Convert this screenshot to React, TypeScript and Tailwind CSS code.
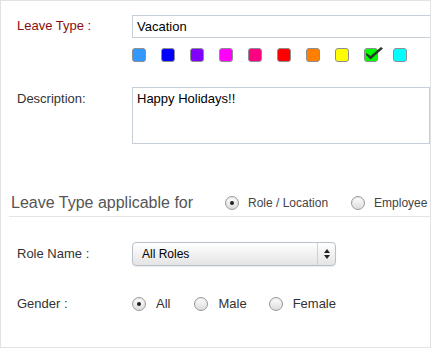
import React from "react";

const swatches = [
  "#3399ff",
  "#0000ff",
  "#8000ff",
  "#ff00ff",
  "#ff0080",
  "#ff0000",
  "#ff8000",
  "#ffff00",
  "#00ff00",
  "#00ffff",
];

function Radio({
  checked,
  label,
  wide,
}: {
  checked?: boolean;
  label: string;
  wide?: boolean;
}) {
  return (
    <label className={wide ? "flex items-center gap-[10px]" : "flex items-center gap-[9px]"}>
      <span className="flex h-[14px] w-[14px] items-center justify-center rounded-full border border-[#9a9a9a] bg-gradient-to-b from-[#ffffff] to-[#dcdcdc] shadow-[inset_0_1px_1px_rgba(0,0,0,0.1)]">
        {checked && <span className="h-[4px] w-[4px] rounded-full bg-[#222]" />}
      </span>
      <span>{label}</span>
    </label>
  );
}

export default function App() {
  return (
    <div className="h-[349px] w-[432px] bg-white">
      <div className="h-[348px] w-[431px] overflow-hidden border border-[#e2e2e2] bg-white font-['Liberation_Sans',Arial,sans-serif] text-[13px] text-[#333]">
        {/* Leave type */}
        <div className="mt-[14px] flex">
          <div className="flex h-[22px] w-[131px] shrink-0 items-center pl-[16px] text-[#8b0d0d]">
            Leave Type :
          </div>
          <div className="flex flex-col">
            <div className="flex h-[23px] w-[320px] items-center border border-[#c6ced8] pl-[4px] text-black">
              Vacation
            </div>
            <div className="mt-[10px] flex gap-[15px]">
              {swatches.map((c, i) => (
                <span
                  key={c}
                  className="relative h-[14px] w-[14px] rounded-[3px] border border-[#8e8e8e]"
                  style={{ backgroundColor: c }}
                >
                  {i === 8 && (
                    <svg
                      className="absolute left-[1px] top-[-4px]"
                      width="18"
                      height="16"
                      viewBox="0 0 18 16"
                    >
                      <path
                        d="M0.5 8 L4.5 11 L15 2 L17 3.5 L4.5 14.5 L0 10 Z"
                        fill="#2b362b"
                      />
                    </svg>
                  )}
                </span>
              ))}
            </div>
          </div>
        </div>

        {/* Description */}
        <div className="mt-[25px] flex">
          <div className="w-[131px] shrink-0 pl-[16px] pt-[2px]">
            Description:
          </div>
          <div className="h-[57px] w-[320px] border border-[#c6ced8] pl-[4px] pt-[1px] text-black">
            Happy Holidays!!
          </div>
        </div>

        {/* Applicable for */}
        <div className="ml-[8px] mt-[46px] flex h-[27px] items-center border-b border-[#e4e4e4] pl-[2px]">
          <span className="w-[214px] text-[16px] text-[#555]">
            Leave Type applicable for
          </span>
          <div className="flex items-center text-[12px] text-[#444]">
            <Radio checked label="Role / Location" />
            <div className="ml-[23px]">
              <Radio label="Employee" />
            </div>
          </div>
        </div>

        {/* Role name */}
        <div className="mt-[25px] flex items-center">
          <div className="w-[131px] shrink-0 pl-[16px]">Role Name :</div>
          <div className="flex h-[24px] w-[204px] items-center rounded-[4px] border border-[#b9c0c9] bg-gradient-to-b from-[#ffffff] to-[#e4e4e4] shadow-[0_1px_1px_rgba(0,0,0,0.08)]">
            <span className="flex-1 pl-[9px] text-[12px] text-black">
              All Roles
            </span>
            <span className="flex h-full w-[18px] items-center justify-center border-l border-[#d0d0d0]">
              <svg width="6" height="10" viewBox="0 0 6 10">
                <path d="M3 0 L6 4 L0 4 Z M0 6 L6 6 L3 10 Z" fill="#222" />
              </svg>
            </span>
          </div>
        </div>

        {/* Gender */}
        <div className="mt-[28px] flex items-center">
          <div className="w-[131px] shrink-0 pl-[16px]">Gender :</div>
          <div className="flex items-center">
            <Radio checked wide label="All" />
            <div className="ml-[24px]">
              <Radio wide label="Male" />
            </div>
            <div className="ml-[22px]">
              <Radio wide label="Female" />
            </div>
          </div>
        </div>
      </div>
    </div>
  );
}
